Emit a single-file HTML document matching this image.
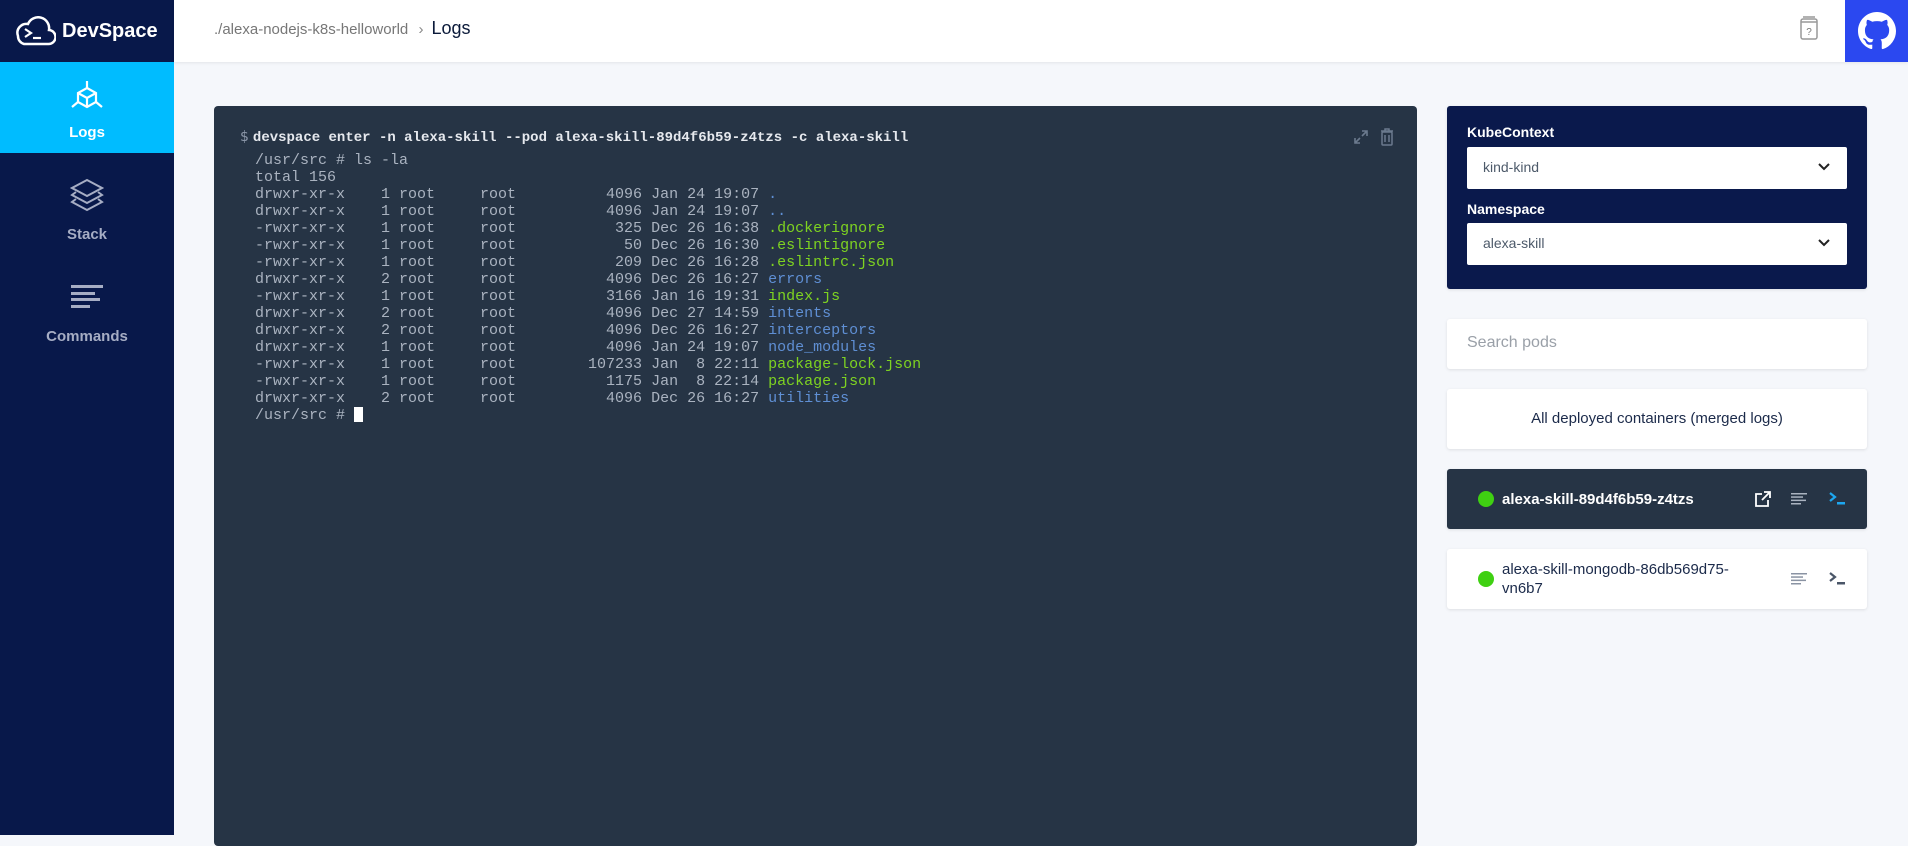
<!DOCTYPE html>
<html><head><meta charset="utf-8">
<style>
*{margin:0;padding:0;box-sizing:border-box}
body{width:1908px;height:835px;overflow:hidden;background:#f5f7fb;font-family:"Liberation Sans",sans-serif;position:relative}
.side{position:absolute;left:0;top:0;width:174px;height:835px;background:#08184a}
.logo{position:absolute;left:14px;top:13px;height:36px;display:flex;align-items:center;color:#fff;font-weight:bold;font-size:20px}
.nav{position:absolute;left:0;width:174px;text-align:center;color:#a6adc4;font-weight:bold;font-size:15px}
.nav.active{background:#00bcff;color:#fff}
.hdr{position:absolute;left:174px;top:0;width:1734px;height:62px;background:#fff;box-shadow:0 1px 3px rgba(0,0,0,.08)}
.crumb{position:absolute;left:40px;top:18px;font-size:15px;color:#777}
.crumb b{font-weight:normal;color:#0b1a3a;font-size:18px;margin-left:8px}
.gh{position:absolute;right:0;top:0;width:63px;height:62px;background:#2b48f0}
.term{position:absolute;left:214px;top:106px;width:1203px;height:740px;background:#263445;border-radius:4px}
.cmd{position:absolute;left:26px;top:23px;font-family:"Liberation Mono",monospace;font-size:14px;color:#e6e9ee;font-weight:bold}
.cmd span{color:#8b96a8;font-family:"DejaVu Sans",sans-serif;font-weight:normal;font-size:14px;margin-right:4px}
pre{position:absolute;left:41px;top:46px;font-family:"Liberation Mono",monospace;font-size:15px;line-height:17px;color:#aab3c0}
.g{color:#7ed321}.b{color:#5f8fd4}
.cur{display:inline-block;width:9px;height:15px;background:#fff;vertical-align:-3px}
.card{position:absolute;left:1447px;width:420px;background:#fff;border-radius:3px;box-shadow:0 1px 3px rgba(0,0,0,.1)}
.kube{background:#0a194c;top:106px;height:183px}
.lbl{position:absolute;left:20px;color:#fff;font-weight:bold;font-size:14px}
.sel{position:absolute;left:20px;width:380px;height:42px;background:#fff;border-radius:2px;font-size:14px;color:#4d5a6a;padding:12px 16px}
.sel svg{position:absolute;right:16px;top:15px}
.pod{display:flex;align-items:center;font-size:15px}
.dot{width:16px;height:16px;border-radius:50%;background:#3fd012;margin-right:8px;margin-left:31px;flex:none}
</style></head><body>
<div class="side">
 <div class="logo">
  <svg width="42" height="30" viewBox="0 0 42 30"><path d="M10 28 H34 A7 7 0 0 0 35 14 A11 11 0 0 0 14 8 A9 9 0 0 0 4 20 A8 8 0 0 0 10 28 Z" fill="none" stroke="#fff" stroke-width="2.5"/><path d="M11 13 L17 17 L11 21" fill="none" stroke="#fff" stroke-width="2.2"/><path d="M19 22 H27" stroke="#fff" stroke-width="2.2"/></svg>
  <span style="margin-left:6px">DevSpace</span>
 </div>
 <div class="nav active" style="top:62px;height:91px">
  <svg width="36" height="34" viewBox="0 0 36 34" style="margin-top:18px"><g fill="none" stroke="#fff" stroke-width="2.2"><path d="M18 1 V8"/><path d="M18 8 L27 13 V22 L18 27 L9 22 V13 Z"/><path d="M9 13 L18 18 L27 13 M18 18 V27"/><path d="M9 22 L3 27 M27 22 L33 27"/></g></svg>
  <div style="margin-top:6px">Logs</div>
 </div>
 <div class="nav" style="top:178px">
  <svg width="34" height="34" viewBox="0 0 34 34"><g fill="none" stroke="#a6adc4" stroke-width="2"><path d="M17 2 L32 10 L17 18 L2 10 Z"/><path d="M6 14 L2 17 L17 25 L32 17 L28 14"/><path d="M6 21 L2 24 L17 32 L32 24 L28 21"/></g></svg>
  <div style="margin-top:10px">Stack</div>
 </div>
 <div class="nav" style="top:285px">
  <svg width="34" height="24" viewBox="0 0 34 24"><g fill="#a6adc4"><rect x="1" y="0" width="32" height="3"/><rect x="1" y="7" width="24" height="3"/><rect x="1" y="13" width="29" height="3"/><rect x="1" y="20" width="19" height="3"/></g></svg>
  <div style="margin-top:15px">Commands</div>
 </div>
</div>
<div class="hdr">
 <div class="crumb">./alexa-nodejs-k8s-helloworld <span style="margin-left:6px;color:#888">›</span><b>Logs</b></div>
 <svg style="position:absolute;left:1626px;top:16px" width="18" height="24" viewBox="0 0 18 24"><g fill="none" stroke="#999" stroke-width="1.5"><rect x="1" y="3" width="16" height="20" rx="2"/><path d="M3 1 H15 M1 6 H17"/></g><text x="9" y="19" font-size="10" fill="#777" text-anchor="middle" font-family="Liberation Sans">?</text></svg>
 <div class="gh"><svg width="38" height="38" viewBox="0 0 16 16" style="margin:12px 0 0 13px"><path fill="#fff" d="M8 0C3.58 0 0 3.580 0 8c0 3.54 2.290 6.530 5.470 7.590.4.07.55-.17.55-.38 0-.19-.01-.82-.01-1.49-2.01.37-2.53-.49-2.69-.94-.09-.23-.48-.94-.82-1.13-.28-.15-.68-.52-.01-.53.63-.01 1.08.58 1.23.82.72 1.21 1.870.87 2.330.66.07-.52.28-.87.51-1.07-1.78-.2-3.64-.89-3.64-3.95 0-.87.31-1.59.82-2.15-.08-.2-.36-1.02.08-2.12 0 0 .67-.21 2.2.82.64-.18 1.32-.27 2-.27.68 0 1.36.09 2 .27 1.53-1.04 2.2-.82 2.2-.82.44 1.1.16 1.92.08 2.12.51.56.82 1.27.82 2.15 0 3.07-1.87 3.75-3.65 3.95.29.25.54.73.54 1.48 0 1.07-.01 1.93-.01 2.2 0 .21.15.46.55.38A8.013 8.013 0 0016 8c0-4.42-3.58-8-8-8z"/></svg></div>
</div>
<div class="term">
 <div class="cmd"><span>$</span>devspace enter -n alexa-skill --pod alexa-skill-89d4f6b59-z4tzs -c alexa-skill</div>
 <svg style="position:absolute;left:1139px;top:23px" width="16" height="16" viewBox="0 0 16 16"><g fill="none" stroke="#6b7a8e" stroke-width="1.6"><path d="M9 2 H14 V7 M14 2 L9 7 M7 14 H2 V9 M2 14 L7 9"/></g></svg>
 <svg style="position:absolute;left:1166px;top:22px" width="14" height="18" viewBox="0 0 14 18"><g fill="none" stroke="#6b7a8e" stroke-width="1.5"><path d="M1 3 H13 M5 3 V1 H9 V3"/><rect x="2" y="4" width="10" height="13" rx="1"/><path d="M5 7 V14 M9 7 V14"/></g></svg>
<pre>/usr/src # ls -la
total 156
drwxr-xr-x    1 root     root          4096 Jan 24 19:07 <span class="b">.</span>
drwxr-xr-x    1 root     root          4096 Jan 24 19:07 <span class="b">..</span>
-rwxr-xr-x    1 root     root           325 Dec 26 16:38 <span class="g">.dockerignore</span>
-rwxr-xr-x    1 root     root            50 Dec 26 16:30 <span class="g">.eslintignore</span>
-rwxr-xr-x    1 root     root           209 Dec 26 16:28 <span class="g">.eslintrc.json</span>
drwxr-xr-x    2 root     root          4096 Dec 26 16:27 <span class="b">errors</span>
-rwxr-xr-x    1 root     root          3166 Jan 16 19:31 <span class="g">index.js</span>
drwxr-xr-x    2 root     root          4096 Dec 27 14:59 <span class="b">intents</span>
drwxr-xr-x    2 root     root          4096 Dec 26 16:27 <span class="b">interceptors</span>
drwxr-xr-x    1 root     root          4096 Jan 24 19:07 <span class="b">node_modules</span>
-rwxr-xr-x    1 root     root        107233 Jan  8 22:11 <span class="g">package-lock.json</span>
-rwxr-xr-x    1 root     root          1175 Jan  8 22:14 <span class="g">package.json</span>
drwxr-xr-x    2 root     root          4096 Dec 26 16:27 <span class="b">utilities</span>
/usr/src # <span class="cur"></span></pre>
</div>
<div class="card kube">
 <div class="lbl" style="top:18px">KubeContext</div>
 <div class="sel" style="top:41px">kind-kind<svg width="14" height="10" viewBox="0 0 14 10"><path d="M2 2 L7 7 L12 2" fill="none" stroke="#222" stroke-width="2"/></svg></div>
 <div class="lbl" style="top:95px">Namespace</div>
 <div class="sel" style="top:117px">alexa-skill<svg width="14" height="10" viewBox="0 0 14 10"><path d="M2 2 L7 7 L12 2" fill="none" stroke="#222" stroke-width="2"/></svg></div>
</div>
<div class="card" style="top:319px;height:50px;padding:15px 20px;font-size:16px;color:#9aa0a8">Search pods</div>
<div class="card" style="top:389px;height:60px;text-align:center;line-height:60px;font-size:15px;color:#1b2a4a">All deployed containers (merged logs)</div>
<div class="card pod" style="top:469px;height:60px;background:#263445;color:#fff;font-weight:bold">
 <div class="dot"></div>alexa-skill-89d4f6b59-z4tzs
 <svg style="position:absolute;left:307px;top:22px" width="17" height="17" viewBox="0 0 17 17"><g fill="none" stroke="#fff" stroke-width="1.8"><path d="M8 3 H2 V15 H14 V9"/><path d="M10 1 H16 V7 M16 1 L8 9"/></g></svg>
 <svg style="position:absolute;left:344px;top:24px" width="16" height="12" viewBox="0 0 16 12"><g fill="#aab3c0"><rect y="0" width="16" height="1.5"/><rect y="3.3" width="12" height="1.5"/><rect y="6.6" width="15" height="1.5"/><rect y="10" width="10" height="1.5"/></g></svg>
 <svg style="position:absolute;left:382px;top:23px" width="16" height="14" viewBox="0 0 16 14"><path d="M1 1 L6 5 L1 9" fill="none" stroke="#1da7f0" stroke-width="2.2"/><rect x="8" y="10" width="8" height="2.5" fill="#1da7f0"/></svg>
</div>
<div class="card pod" style="top:549px;height:60px;color:#1b2a4a">
 <div class="dot"></div><div style="line-height:19px">alexa-skill-mongodb-86db569d75-<br>vn6b7</div>
 <svg style="position:absolute;left:344px;top:24px" width="16" height="12" viewBox="0 0 16 12"><g fill="#8a93a3"><rect y="0" width="16" height="1.5"/><rect y="3.3" width="12" height="1.5"/><rect y="6.6" width="15" height="1.5"/><rect y="10" width="10" height="1.5"/></g></svg>
 <svg style="position:absolute;left:382px;top:23px" width="16" height="14" viewBox="0 0 16 14"><path d="M1 1 L6 5 L1 9" fill="none" stroke="#4a5668" stroke-width="2.2"/><rect x="8" y="10" width="8" height="2.5" fill="#4a5668"/></svg>
</div>
</body></html>
